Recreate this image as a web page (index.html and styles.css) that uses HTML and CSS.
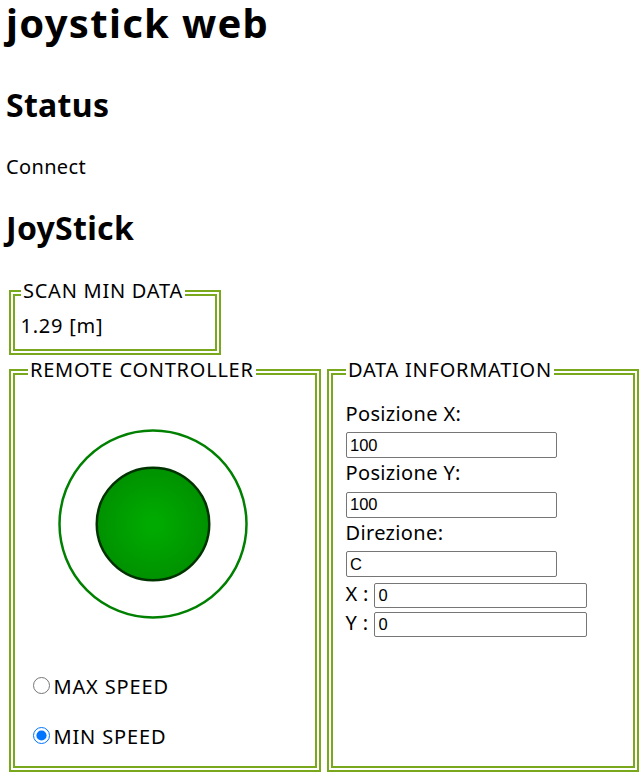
FILE: index.html
```html
<!DOCTYPE html>
<html lang="en">
<head>
<meta charset="utf-8">
<title>joystick web</title>
<link rel="stylesheet" href="styles.css">
</head>
<body>
  <h1 class="title">joystick web</h1>
  <h2 class="section status-title">Status</h2>
  <p class="status">Connect</p>
  <h2 class="section joy-title">JoyStick</h2>

  <fieldset class="box scan">
    <legend class="box-legend">SCAN MIN DATA</legend>
    <div class="scan-value">1.29 [m]</div>
  </fieldset>

  <div class="panels">
    <fieldset class="box remote">
      <legend class="box-legend">REMOTE CONTROLLER</legend>
      <svg class="joystick" width="250" height="250" viewBox="0 0 250 250">
        <defs>
          <radialGradient id="knob" gradientUnits="userSpaceOnUse" cx="125" cy="125" r="250" fx="125" fy="125" fr="6.25">
            <stop offset="0" stop-color="#00AA00"/>
            <stop offset="1" stop-color="#003300"/>
          </radialGradient>
        </defs>
        <circle cx="125" cy="125" r="93.5" fill="none" stroke="#008000" stroke-width="2.5"/>
        <circle cx="125" cy="125" r="56.25" fill="url(#knob)" stroke="#003300" stroke-width="2.5"/>
      </svg>
      <label class="speed speed-max"><input class="radio" type="radio" name="speed">MAX SPEED</label>
      <label class="speed speed-min"><input class="radio" type="radio" name="speed" checked>MIN SPEED</label>
    </fieldset>

    <fieldset class="box info">
      <legend class="box-legend">DATA INFORMATION</legend>
      <div class="field-label">Posizione X:</div>
      <input class="field" type="text" value="100">
      <div class="field-label">Posizione Y:</div>
      <input class="field" type="text" value="100">
      <div class="field-label">Direzione:</div>
      <input class="field" type="text" value="C">
      <div class="axis axis-x"><span class="axis-label">X :</span><input class="field axis-field" type="text" value="0"></div>
      <div class="axis axis-y"><span class="axis-label">Y :</span><input class="field axis-field" type="text" value="0"></div>
    </fieldset>
  </div>
</body>
</html>
```
FILE: styles.css
```css
html, body {
  background: #ffffff;
}

body {
  margin: 0;
  padding: 0 0 0 6px;
  font-family: "Noto Sans", "DejaVu Sans", sans-serif;
  font-size: 20px;
  letter-spacing: 0.35px;
  color: #000000;
}

.title {
  margin: 0;
  font-size: 40px;
  line-height: 46px;
  font-weight: 700;
  letter-spacing: 1.3px;
}

.section {
  margin: 41px 0 0 0;
  font-size: 32px;
  line-height: 36px;
  font-weight: 700;
  letter-spacing: 0.3px;
}

.status {
  margin: 30px 0 0 0;
  line-height: 28px;
}

.joy-title {
  margin-top: 29px;
}

.box {
  margin: 0;
  min-width: 0;
  border: 6px double #79a81c;
  box-sizing: border-box;
}

.box-legend {
  padding: 0 2.5px 4.5px 2.5px;
  line-height: 28px;
  font-size: 20px;
  letter-spacing: 0.75px;
}

.scan {
  width: 212px;
  margin: 31px 0 0 3px;
  padding: 2.5px 6px 8.75px 5.5px;
}

.scan-value {
  line-height: 28px;
  letter-spacing: 0.75px;
}

.panels {
  display: flex;
  gap: 6px;
  margin: 1px 0 0 3px;
}

.remote,
.info {
  width: 312px;
  flex: 0 0 312px;
  padding: 11px 6px 14.5px 12.5px;
}

.joystick {
  display: block;
}

.speed {
  display: flex;
  align-items: baseline;
  line-height: 28px;
  letter-spacing: 0.85px;
}

.speed-max {
  margin-top: 24px;
}

.speed-min {
  margin-top: 22px;
}

.radio {
  width: 17px;
  height: 17px;
  margin: 3.75px 4px 0 5px;
  align-self: baseline;
}

.info {
  padding-top: 10.5px;
}

.field-label {
  line-height: 29px;
}

.field {
  display: block;
  box-sizing: border-box;
  width: 211px;
  height: 26px;
  margin: 4.5px 0 0 0;
  padding: 1px 3.5px;
  border: 1px solid #767676;
  border-radius: 2px;
  font-family: "Liberation Sans", Arial, sans-serif;
  font-size: 16.5px;
  letter-spacing: 0;
  color: #000000;
  background: #ffffff;
}

.axis {
  display: flex;
  align-items: baseline;
  line-height: 20px;
}

.axis-x {
  margin-top: 6px;
}

.axis-y {
  margin-top: 4px;
}

.axis-label {
  width: 28.5px;
  flex: 0 0 28.5px;
}

.axis-field {
  width: 213px;
  height: 25px;
  margin: 0;
}
```
